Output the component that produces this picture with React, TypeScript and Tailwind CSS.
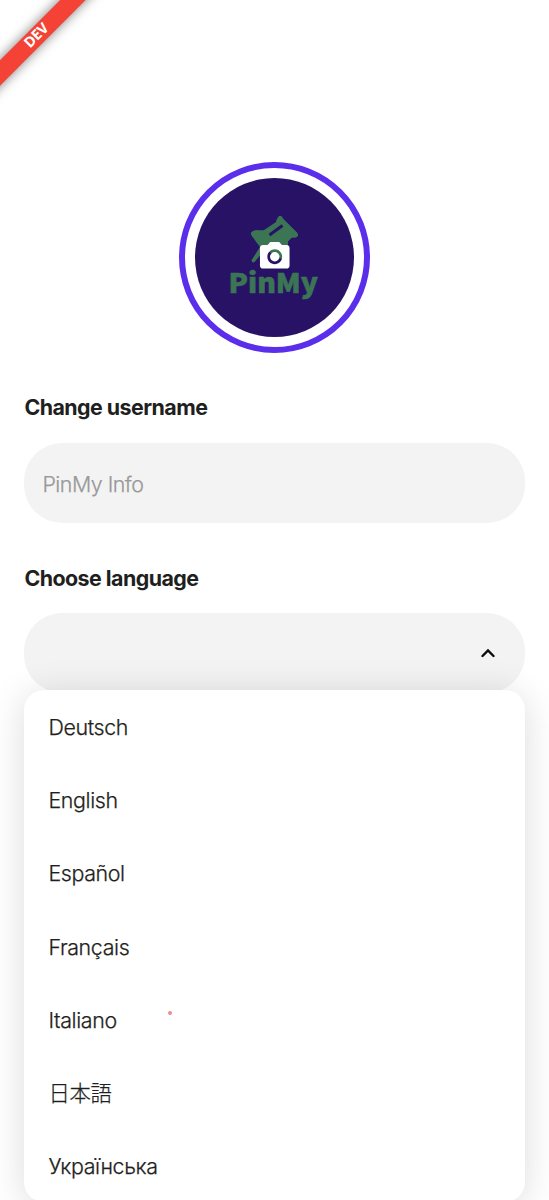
import { useState } from 'react';
import { MdCameraAlt } from 'react-icons/md';

const LANGUAGES = [
  { code: 'de', label: 'Deutsch' },
  { code: 'en', label: 'English' },
  { code: 'es', label: 'Español' },
  { code: 'fr', label: 'Français' },
  { code: 'it', label: 'Italiano' },
  { code: 'ja', label: '日本語' },
  { code: 'uk', label: 'Українська' },
];

function DevRibbon() {
  return (
    <div className="absolute left-[-63.5px] top-[27.3px] flex h-[18.4px] w-[200px] -rotate-45 items-center justify-center bg-[#f44336] shadow-[0_0_12px_rgba(0,0,0,0.5)]">
      <span className="pb-px font-['Open_Sans','Noto_Sans',sans-serif] text-[14.5px] font-bold leading-none tracking-[-0.2px] text-white">
        DEV
      </span>
    </div>
  );
}

function Avatar() {
  return (
    <div className="flex size-[191px] items-center justify-center rounded-full border-[6px] border-[#5b2eeb]">
      <button className="grid size-[159px] place-items-center rounded-full bg-[#271266]">
        <svg viewBox="0 0 159 159" className="col-start-1 row-start-1 size-[159px]">
          <g fill="#3b7554">
            <path d="M83.500 38.500q1.500-1.500 3.200 0L89 41.500l13 13q2 2.200.3 4.200q-2 1.500-5.300.8l-4 4v12q-1 5-4.500 6.500L70 71.500L59.500 84q-2.500 1.500-3-1.800L65 69L56.500 57.500q-1.500-3 .8-4q3-2.200 6-1.300h5.500L81 44q0-2 2.500-5.500z" />
            <path d="M74.500 57l13-9.500" stroke="#271266" strokeWidth="3" />
          </g>
          <text
            x="33.500"
            y="114.500"
            textLength="89.500"
            lengthAdjust="spacingAndGlyphs"
            fill="#3b7554"
            stroke="#3b7554"
            strokeWidth="0.600"
            className="font-['Noto_Sans_CJK_JP','Noto_Sans_CJK_SC',sans-serif] text-[27px] font-black"
          >
            PinMy
          </text>
        </svg>
        <MdCameraAlt className="col-start-1 row-start-1 size-[35.5px] text-white" />
      </button>
    </div>
  );
}

export default function App() {
  const [username, setUsername] = useState('');
  const [open, setOpen] = useState(true);

  return (
    <div className="relative flex h-[1200px] w-full flex-col gap-[38.8px] overflow-hidden bg-white px-[24.4px] pt-[161.6px] font-['Inter','Noto_Sans_CJK_JP',sans-serif] text-[#1f1f21]">
      <DevRibbon />

      <div className="flex justify-center">
        <Avatar />
      </div>

      <section className="flex flex-col gap-[19.5px]">
        <h2 className="text-[21.4px] font-[650] leading-8 tracking-[-0.54px]">Change username</h2>
        <input
          value={username}
          onChange={(e) => setUsername(e.target.value)}
          placeholder="PinMy Info"
          className="h-20 w-full rounded-[38px] bg-[#f3f3f3] px-[18px] pt-[2px] text-[21.4px] font-light tracking-[-0.5px] outline-none [-webkit-text-stroke:0.25px] placeholder:text-[#999]"
        />
      </section>

      <section className="flex flex-col gap-[19.5px]">
        <h2 className="text-[21.4px] font-[650] leading-8 tracking-[-0.54px]">Choose language</h2>
        <div className="relative">
          <button
            onClick={() => setOpen(!open)}
            className="flex h-20 w-full items-center justify-end rounded-[38px] bg-[#f3f3f3] pr-[30px]"
          >
            <svg viewBox="0 0 14 10" className="h-[10px] w-[14px]" fill="none">
              <path d="M1.500 8L7 2.500L12.500 8" stroke="#0c0c0c" strokeWidth="2.400" strokeLinecap="round" />
            </svg>
          </button>

          {open && (
            <ul className="absolute inset-x-0 top-[76.4px] rounded-[20px] bg-white shadow-[0_4px_36px_rgba(0,0,0,0.14)]">
              {LANGUAGES.map((lang) => (
                <li
                  key={lang.code}
                  className="flex h-[73.25px] items-center px-6 pt-[1.3px] text-[21.4px] font-light leading-8 tracking-[-0.36px] [-webkit-text-stroke:0.25px]"
                >
                  {lang.label}
                </li>
              ))}
              <li className="absolute left-[143.5px] top-[321px] size-[4.5px] rounded-full bg-[#f08a8c]" />
            </ul>
          )}
        </div>
      </section>
    </div>
  );
}
